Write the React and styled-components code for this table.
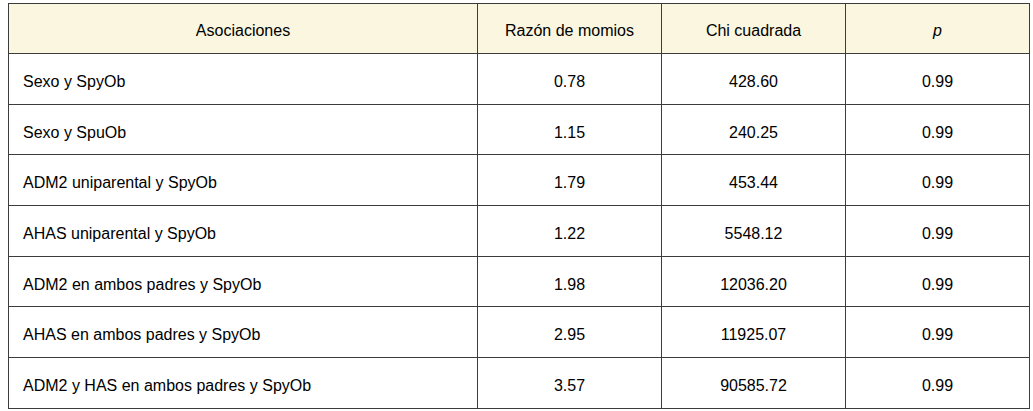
import React from "react";
import styled, { createGlobalStyle } from "styled-components";

const GlobalStyle = createGlobalStyle`
  html, body {
    margin: 0;
    padding: 0;
    background: #ffffff;
  }
  body {
    font-family: "Liberation Sans", Arial, sans-serif;
    color: #000000;
  }
`;

const Page = styled.div`
  padding: 3px 4px 0 8px;
`;

const Table = styled.table`
  width: 1021px;
  border-collapse: collapse;
  table-layout: fixed;
  font-size: 16px;
`;

const HeadCell = styled.th`
  height: 50px;
  padding: 4px 12px 0;
  box-sizing: border-box;
  background: #faf6df;
  border: 1px solid #3c3c3c;
  font-weight: normal;
  font-style: ${(p) => (p.$italic ? "italic" : "normal")};
  text-align: center;
  vertical-align: middle;
`;

const Cell = styled.td`
  height: 50.7px;
  padding: 6px 14px 0;
  box-sizing: border-box;
  border: 1px solid #3c3c3c;
  text-align: ${(p) => (p.$left ? "left" : "center")};
  vertical-align: middle;
  white-space: nowrap;
`;

const rows = [
  ["Sexo y SpyOb", "0.78", "428.60", "0.99"],
  ["Sexo y SpuOb", "1.15", "240.25", "0.99"],
  ["ADM2 uniparental y SpyOb", "1.79", "453.44", "0.99"],
  ["AHAS uniparental y SpyOb", "1.22", "5548.12", "0.99"],
  ["ADM2 en ambos padres y SpyOb", "1.98", "12036.20", "0.99"],
  ["AHAS en ambos padres y SpyOb", "2.95", "11925.07", "0.99"],
  ["ADM2 y HAS en ambos padres y SpyOb", "3.57", "90585.72", "0.99"],
];

const App = () => {
  return (
    <Page>
      <GlobalStyle />
      <Table>
        <colgroup>
          <col style={{ width: 469 }} />
          <col style={{ width: 184 }} />
          <col style={{ width: 184 }} />
          <col style={{ width: 184 }} />
        </colgroup>
        <thead>
          <tr>
            <HeadCell>Asociaciones</HeadCell>
            <HeadCell>Razón de momios</HeadCell>
            <HeadCell>Chi cuadrada</HeadCell>
            <HeadCell $italic>p</HeadCell>
          </tr>
        </thead>
        <tbody>
          {rows.map((r) => (
            <tr key={r[0]}>
              <Cell $left>{r[0]}</Cell>
              <Cell>{r[1]}</Cell>
              <Cell>{r[2]}</Cell>
              <Cell>{r[3]}</Cell>
            </tr>
          ))}
        </tbody>
      </Table>
    </Page>
  );
};

export default App;
